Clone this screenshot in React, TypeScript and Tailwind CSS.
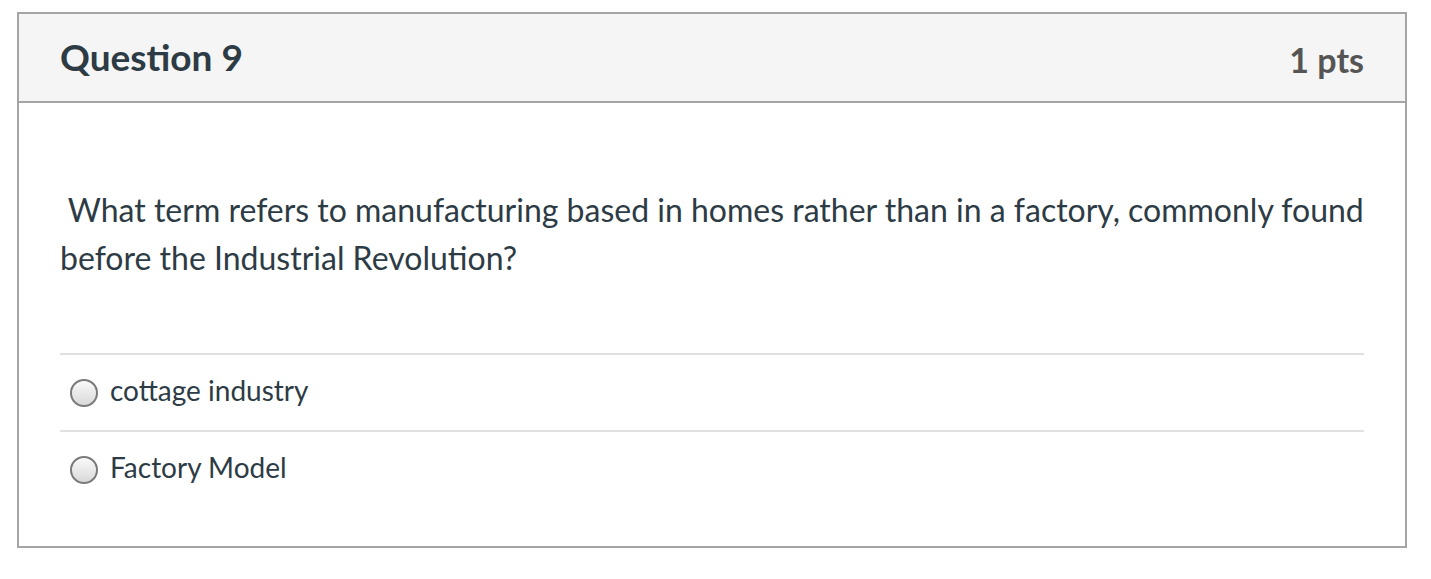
export default function App() {
  const answers = ["cottage industry", "Factory Model"];
  return (
    <div className="min-h-screen bg-white pl-[17px] pt-[12px] font-['Lato','Liberation_Sans',sans-serif]">
      <div className="w-[1390px] h-[536px] border-2 border-[#a5a5a5] bg-white">
        <div className="h-[89px] flex items-center justify-between px-[41px] bg-[#f5f5f5] border-b-2 border-[#a5a5a5]">
          <h2 className="text-[37px] font-bold text-[#2d3b45] pb-[2px]">Question 9</h2>
          <span className="text-[34px] font-bold text-[#555555] pt-[4px]">1 pts</span>
        </div>
        <div className="px-[41px]">
          <p className="pt-[83px] text-[32px] leading-[48px] text-[#2d3b45]">
            &nbsp;What term refers to manufacturing based in homes rather than in a factory, commonly found before the Industrial Revolution?
          </p>
          <div className="mt-[71px]">
            {answers.map((a) => (
              <div key={a} className="h-[77px] border-t-2 border-[#e0e0e0] flex items-center gap-[12px] pl-[10px]">
                <div className="w-[28px] h-[28px] rounded-full border-2 border-[#7a7a7a] bg-gradient-to-b from-[#fafafa] to-[#d9d9d9]" />
                <span className="text-[28px] text-[#2d3b45] pb-[5px]">{a}</span>
              </div>
            ))}
          </div>
        </div>
      </div>
    </div>
  );
}
